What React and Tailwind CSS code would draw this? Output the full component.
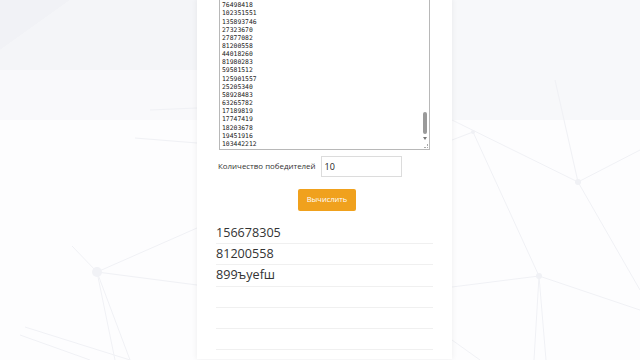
import React from "react";

const numbers = [
  "104376449",
  "76498418",
  "102351551",
  "135893746",
  "27323670",
  "27877082",
  "81200558",
  "44018260",
  "81980283",
  "59581512",
  "125901557",
  "25205340",
  "58928483",
  "63265782",
  "17189819",
  "17747419",
  "18203678",
  "19451916",
  "103442212",
];

const winners = ["156678305", "81200558", "899ъyefш", "", "", "", "", "", "", ""];

function Backdrop() {
  return (
    <svg className="absolute inset-0 h-full w-full" viewBox="0 0 640 360" preserveAspectRatio="none">
      <rect x="0" y="0" width="640" height="120" fill="#f7f8fa" />
      <polygon points="0,0 70,0 0,50" fill="#f1f2f6" />
      <polygon points="0,50 70,0 200,0 200,70 0,70" fill="#f4f5f8" />
      <polygon points="0,70 200,70 200,120 0,120" fill="#f9f9fb" />
      <g stroke="#f0f1f5" strokeWidth="1" fill="none">
        <line x1="97" y1="272" x2="197" y2="228" />
        <line x1="97" y1="272" x2="197" y2="285" />
        <line x1="97" y1="272" x2="72" y2="246" />
        <line x1="97" y1="272" x2="130" y2="360" />
        <line x1="97" y1="272" x2="115" y2="360" />
        <line x1="25" y1="327" x2="130" y2="360" />
        <line x1="20" y1="335" x2="90" y2="360" />
        <line x1="135" y1="138" x2="197" y2="143" />
        <line x1="150" y1="110" x2="197" y2="108" />
        <line x1="452" y1="120" x2="578" y2="182" />
        <line x1="452" y1="140" x2="473" y2="132" />
        <line x1="473" y1="132" x2="539" y2="276" />
        <line x1="555" y1="80" x2="578" y2="182" />
        <line x1="578" y1="182" x2="640" y2="150" />
        <line x1="578" y1="182" x2="640" y2="290" />
        <line x1="539" y1="276" x2="640" y2="310" />
        <line x1="452" y1="287" x2="539" y2="276" />
        <line x1="539" y1="276" x2="546" y2="360" />
        <line x1="539" y1="276" x2="534" y2="360" />
        <line x1="452" y1="340" x2="480" y2="360" />
      </g>
      <circle cx="97" cy="272" r="5" fill="#f1f2f6" />
      <circle cx="578" cy="182" r="3" fill="#f0f1f5" />
      <circle cx="539" cy="276" r="3" fill="#f0f1f5" />
      <circle cx="473" cy="132" r="2" fill="#f0f1f5" />
    </svg>
  );
}

export default function App() {
  return (
    <div className="relative h-[360px] w-full overflow-hidden bg-[#fdfdfe]">
      <Backdrop />
      <div className="relative ml-[197px] h-[360px] w-[255px] bg-white shadow-[0_0_6px_rgba(0,0,0,0.07)]">
        <div className="px-[22px]">
          <div className="relative -mt-px h-[151px] overflow-hidden border border-[#b8b8b8]">
            <div
              className="flex h-full flex-col justify-end pb-[1px] pl-[2px] text-[6.4px] leading-[8.15px] text-[#222]"
              style={{ fontFamily: '"DejaVu Sans Mono", monospace' }}
            >
              {numbers.map((n, i) => (
                <div key={i}>{n}</div>
              ))}
            </div>
            <div className="absolute right-[2px] top-[112px] h-[22px] w-[4px] rounded-sm bg-[#9a9a9a]" />
            <div className="absolute right-[2px] top-[137px] h-0 w-0 border-l-[2px] border-r-[2px] border-t-[3px] border-l-transparent border-r-transparent border-t-[#777]" />
            <div className="absolute bottom-[1px] right-[1px] h-[4px] w-[4px] border-b border-r border-dotted border-[#aaa]" />
          </div>
        </div>

        <div
          className="mt-[6px] flex items-center pl-[21px]"
          style={{ fontFamily: '"Open Sans", sans-serif' }}
        >
          <span className="pt-[1px] text-[7.9px] text-[#333]">Количество победителей</span>
          <div className="ml-[5px] flex h-[21px] w-[81px] items-center border border-[#dcdcdc] px-[3px] text-[9px] text-[#222]">
            10
          </div>
        </div>

        <div className="mt-[12px] flex justify-center pl-[5px]" style={{ fontFamily: '"Open Sans", sans-serif' }}>
          <button className="h-[22px] w-[58px] rounded-[2px] bg-[#f0a11d] text-[7.5px] text-white">Вычислить</button>
        </div>

        <div className="mt-[12px] px-[19px]" style={{ fontFamily: '"Open Sans", sans-serif' }}>
          {winners.map((w, i) => (
            <div
              key={i}
              className="flex h-[21.2px] items-center border-b border-[#f0f0f0] text-[12.6px] leading-none text-[#333]"
            >
              {w}
            </div>
          ))}
        </div>
      </div>
    </div>
  );
}
